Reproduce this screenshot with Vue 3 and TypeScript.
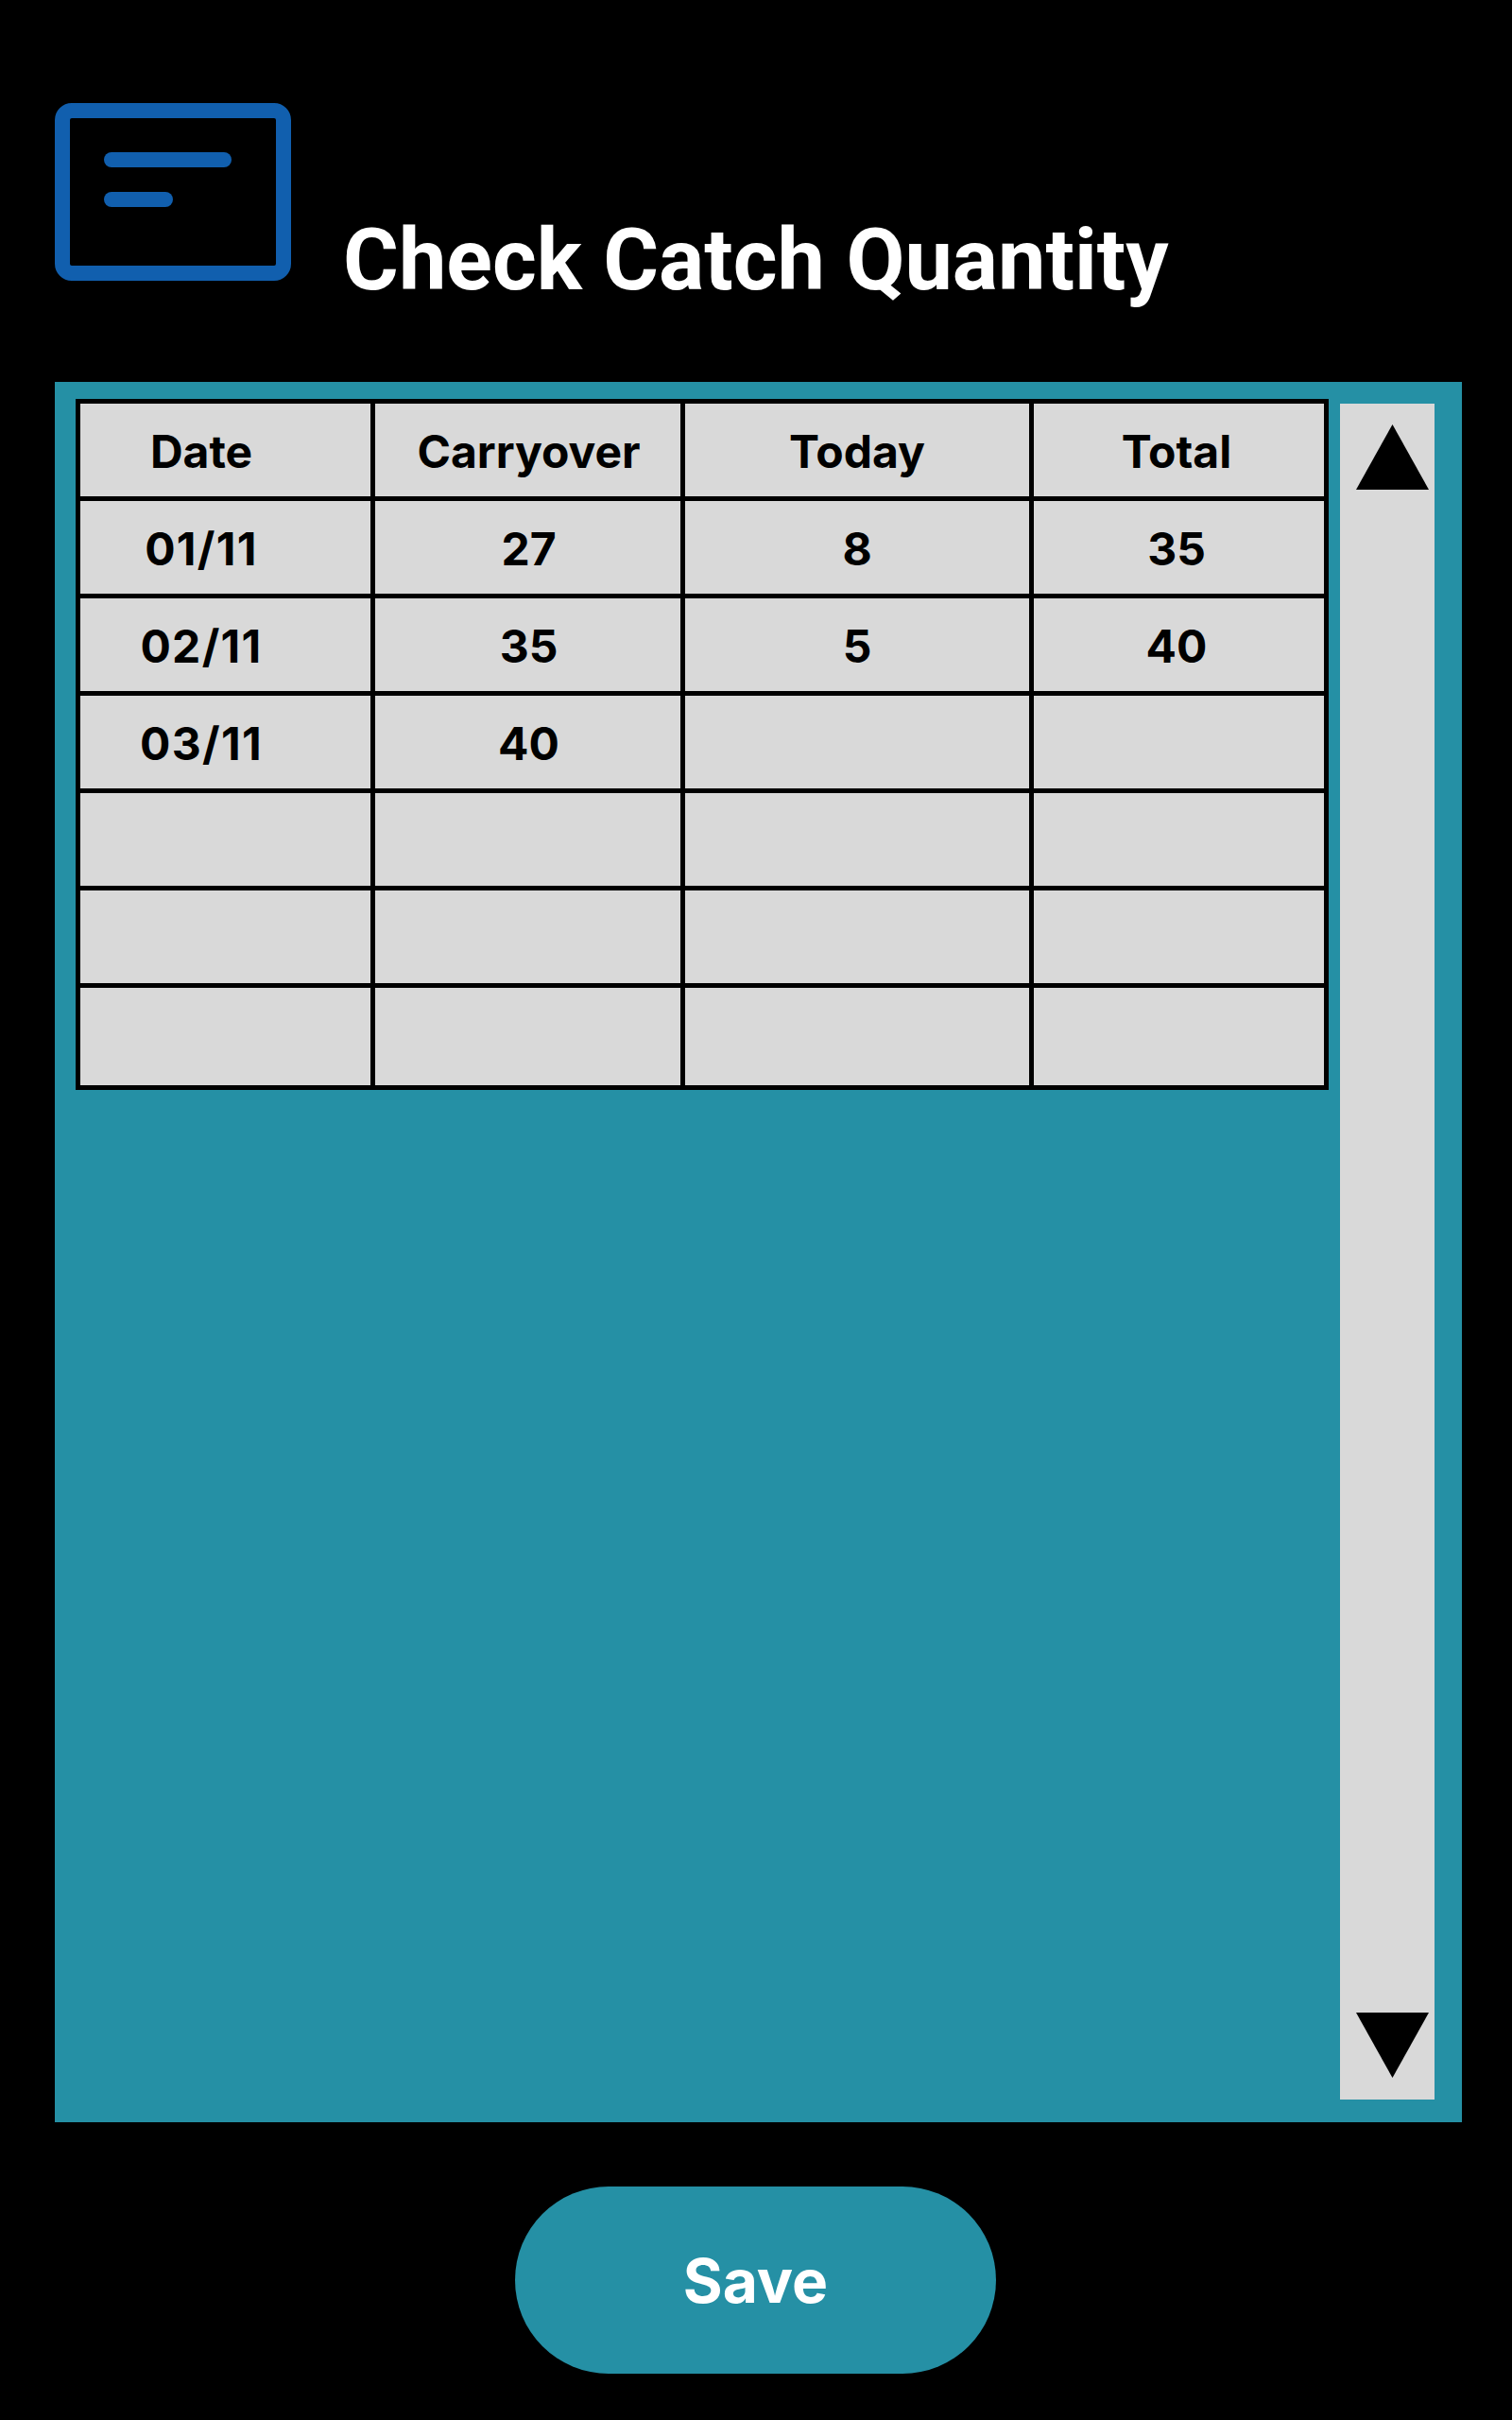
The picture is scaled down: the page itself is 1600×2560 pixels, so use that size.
<script setup lang="ts">
const columns = ['Date', 'Carryover', 'Today', 'Total']

const rows: string[][] = [
  ['01/11', '27', '8', '35'],
  ['02/11', '35', '5', '40'],
  ['03/11', '40', '', ''],
  ['', '', '', ''],
  ['', '', '', ''],
  ['', '', '', ''],
]
</script>

<template>
  <div class="screen">
    <header class="header">
      <svg class="logo" width="250" height="188" viewBox="0 0 250 188" aria-hidden="true">
        <rect x="8" y="8" width="234" height="172" rx="10" fill="none" stroke="#115fae" stroke-width="16" />
        <rect x="52" y="52" width="135" height="16" rx="8" fill="#115fae" />
        <rect x="52" y="94" width="73" height="16" rx="8" fill="#115fae" />
      </svg>
      <h1 class="title">Check Catch Quantity</h1>
    </header>

    <section class="panel">
      <div class="grid">
        <div v-for="(col, j) in columns" :key="col" class="cell" :class="`col-${j}`">{{ col }}</div>
        <template v-for="(row, i) in rows" :key="i">
          <div v-for="(val, j) in row" :key="j" class="cell" :class="[`col-${j}`, { date: j === 0 }]">{{ val }}</div>
        </template>
      </div>

      <div class="scrollbar">
        <svg width="77" height="69" viewBox="0 0 77 69" aria-hidden="true"><path d="M38.5 0 77 69H0z" /></svg>
        <svg width="77" height="69" viewBox="0 0 77 69" aria-hidden="true"><path d="M0 0h77L38.5 69z" /></svg>
      </div>
    </section>

    <div class="actions">
      <button class="save" type="button">Save</button>
    </div>
  </div>
</template>

<style scoped>
.screen {
  width: 1600px;
  height: 2560px;
  padding: 109px 53px 0 58px;
  box-sizing: border-box;
  background: #000;
  overflow: hidden;
}
.header {
  display: flex;
  align-items: flex-end;
  gap: 55px;
  height: 295px;
}
.logo {
  display: block;
  align-self: flex-start;
}
.title {
  margin: 0 0 76px;
  font-family: Roboto, "Liberation Sans", sans-serif;
  font-size: 90px;
  font-weight: 700;
  line-height: 105px;
  color: #fff;
}
.panel {
  display: flex;
  align-items: flex-start;
  gap: 12px;
  height: 1841px;
  padding: 18px 29px 24px 22px;
  box-sizing: border-box;
  background: #2590a5;
}
.grid {
  display: grid;
  grid-template-columns: 307px 323px 364px 307px;
  grid-template-rows: repeat(6, 98px) 103px;
  gap: 5px;
  padding: 5px;
  background: #000;
}
.cell {
  display: flex;
  align-items: center;
  justify-content: center;
  padding-top: 3px;
  box-sizing: border-box;
  background: #d9d9d9;
  color: #000;
  font-family: Inter, "Liberation Sans", sans-serif;
  font-size: 48px;
  font-weight: 700;
}
.col-0 {
  padding-right: 51px;
}
.col-1 {
  padding-left: 2px;
}
.col-3 {
  padding-right: 5px;
}
.date {
  letter-spacing: 1.3px;
  font-kerning: none;
}
.scrollbar {
  display: flex;
  flex-direction: column;
  justify-content: space-between;
  align-items: flex-start;
  align-self: stretch;
  width: 100px;
  margin-top: 5px;
  padding: 22px 0 23px 17px;
  box-sizing: border-box;
  background: #d9d9d9;
}
.scrollbar svg {
  display: block;
}
.actions {
  display: flex;
  justify-content: center;
  padding: 68px 6px 0 0;
}
.save {
  width: 509px;
  height: 198px;
  border: 0;
  border-radius: 99px;
  background: #2590a5;
  color: #fff;
  font-family: Inter, "Liberation Sans", sans-serif;
  font-size: 64px;
  font-weight: 700;
}
</style>
